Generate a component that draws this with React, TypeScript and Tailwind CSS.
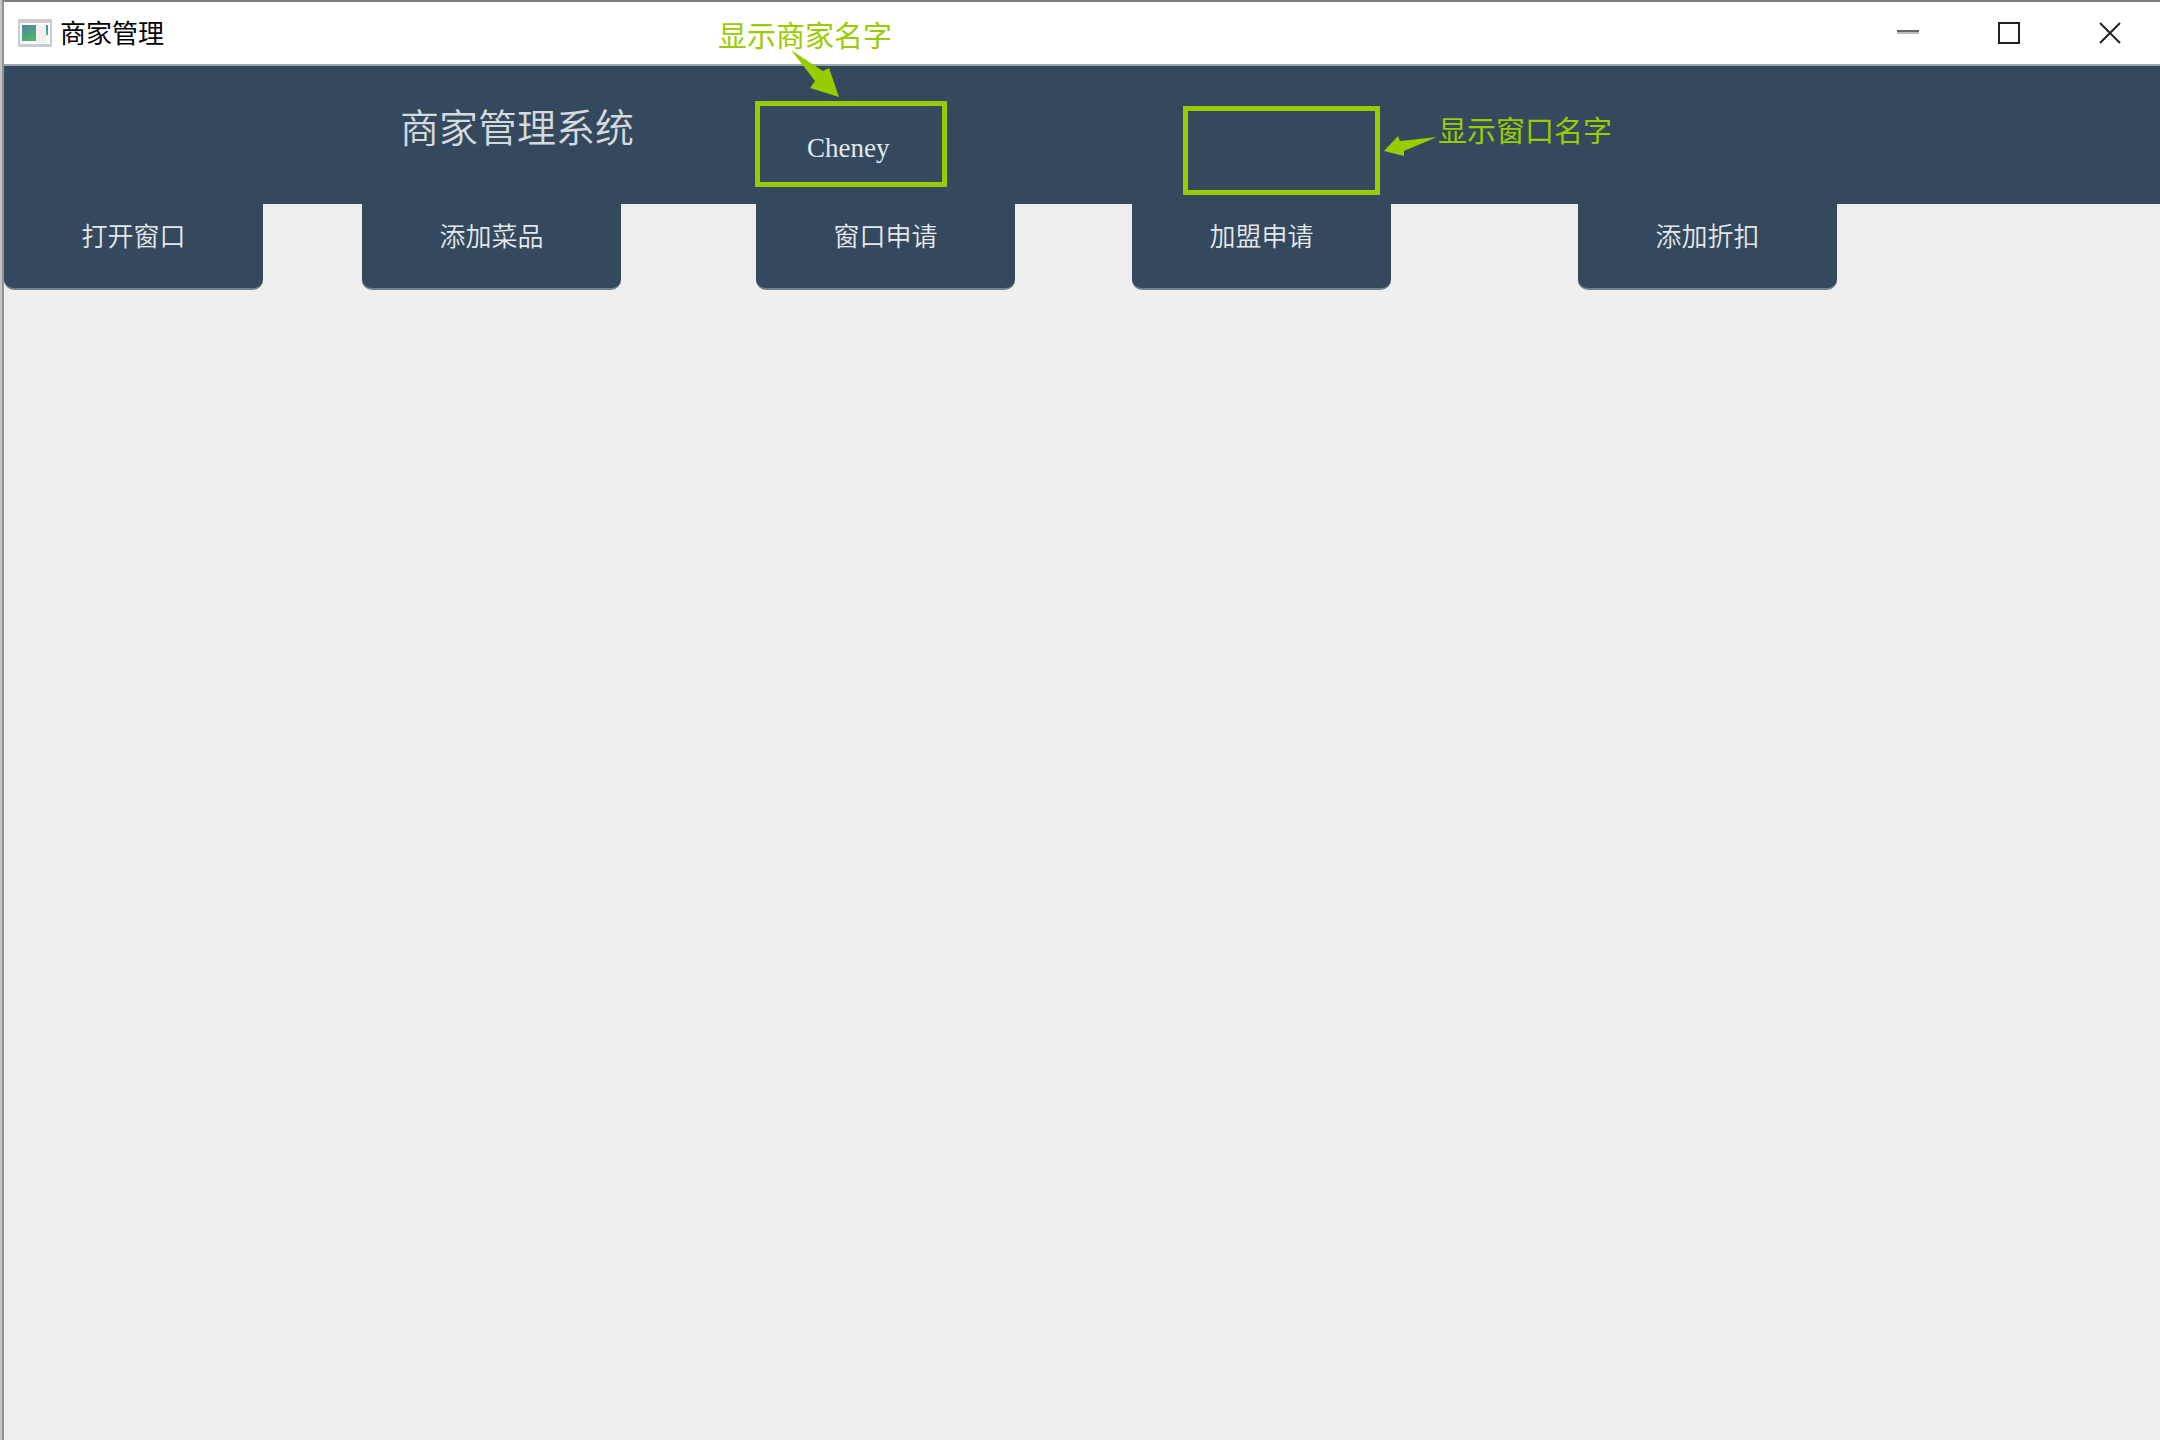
import React from 'react';

const tabs = ['打开窗口', '添加菜品', '窗口申请', '加盟申请', '添加折扣'];

function AppIcon() {
  return (
    <svg width="34" height="28" viewBox="0 0 34 28" aria-hidden="true">
      <defs>
        <linearGradient id="pane" x1="0" y1="0" x2="0.3" y2="1">
          <stop offset="0" stopColor="#4f86a6" />
          <stop offset="1" stopColor="#52b06c" />
        </linearGradient>
      </defs>
      <rect x="0" y="0" width="34" height="28" rx="1" fill="#c9cdd0" />
      <rect x="2" y="4" width="30" height="21" fill="#fbfbfb" />
      <rect x="4" y="6" width="14" height="16" fill="url(#pane)" />
      <rect x="18" y="6" width="10" height="18" fill="#f0f0f0" />
      <rect x="28" y="6" width="2" height="10" fill="url(#pane)" />
    </svg>
  );
}

function TitleBar() {
  return (
    <div className="flex h-16 items-center justify-between border-b-2 border-[#9aa5af] bg-white">
      <div className="flex items-center gap-2 pl-[14px]">
        <AppIcon />
        <h1 className="pb-0.5 text-[26px] leading-8 text-black">商家管理</h1>
      </div>
      <div className="flex h-full text-[#222]">
        <button aria-label="最小化" className="flex w-[101px] items-center justify-center">
          <svg width="22" height="22" viewBox="0 0 22 22">
            <path d="M0 9h22" stroke="#666" strokeWidth="2" />
            <path d="M0 11h22" stroke="#bbb" strokeWidth="2" />
          </svg>
        </button>
        <button aria-label="最大化" className="flex w-[101px] items-center justify-center">
          <svg width="22" height="22" viewBox="0 0 22 22">
            <rect x="1" y="1" width="20" height="20" fill="none" stroke="currentColor" strokeWidth="2" />
          </svg>
        </button>
        <button aria-label="关闭" className="flex w-[101px] items-center justify-center">
          <svg width="22" height="22" viewBox="0 0 22 22">
            <path d="M1 1l20 20M21 1L1 21" stroke="currentColor" strokeWidth="2" />
          </svg>
        </button>
      </div>
    </div>
  );
}

function Header() {
  return (
    <header className="grid h-[138px] grid-cols-[396fr_355fr_428fr_977fr] items-start bg-[#34495e]">
      <h2 className="col-start-2 pt-[35px] text-[39px] leading-[48px] font-[350] whitespace-nowrap text-[#d5dade]">
        商家管理系统
      </h2>

      {/* merchant name */}
      <div className="relative mt-[35px] h-[86px] w-[192px] border-5 border-[#99cc00]">
        <p className="pt-[26px] pl-[47px] font-['Liberation_Serif',serif] text-[27px] leading-8 text-[#e4e8eb]">
          Cheney
        </p>
        <span className="absolute -top-[90px] -left-[42px] text-[29px] leading-9 whitespace-nowrap text-[#99cc00]">
          显示商家名字
        </span>
        <svg className="absolute -top-[58px] left-[28px]" width="54" height="52" viewBox="0 0 54 52" aria-hidden="true">
          <path d="M3 2L35 23L41 20L51 49L22 40L27 33Z" fill="#99cc00" />
        </svg>
      </div>

      <div className="relative mt-10 h-[89px] w-[197px] border-5 border-[#99cc00]">
        <span className="absolute top-0 left-[250px] text-[29px] leading-9 whitespace-nowrap text-[#99cc00]">
          显示窗口名字
        </span>
        <svg className="absolute top-[21px] left-[194px]" width="58" height="28" viewBox="0 0 58 28" aria-hidden="true">
          <path d="M55 5L18 9L16 4L2 19L22 24L22 19Z" fill="#99cc00" />
        </svg>
      </div>
    </header>
  );
}

export default function App() {
  return (
    <div className="min-h-screen border-l-2 border-[#c4c4c4] font-['Noto_Sans_CJK_SC',sans-serif]">
      <div className="min-h-screen border-t-2 border-l-2 border-t-[#7f7f7a] border-l-[#929292] bg-[#efefef]">
        <TitleBar />
        <Header />
        <nav className="grid grid-cols-[358fr_394fr_376fr_446fr_582fr]">
          {tabs.map((tab) => (
            <button
              key={tab}
              className="h-[86px] w-[259px] rounded-b-[10px] border-b-2 border-[#71808f] bg-[#34495e] pb-[22px] text-[26px] leading-8 font-[350] text-[#e4e8eb]"
            >
              {tab}
            </button>
          ))}
        </nav>
      </div>
    </div>
  );
}
